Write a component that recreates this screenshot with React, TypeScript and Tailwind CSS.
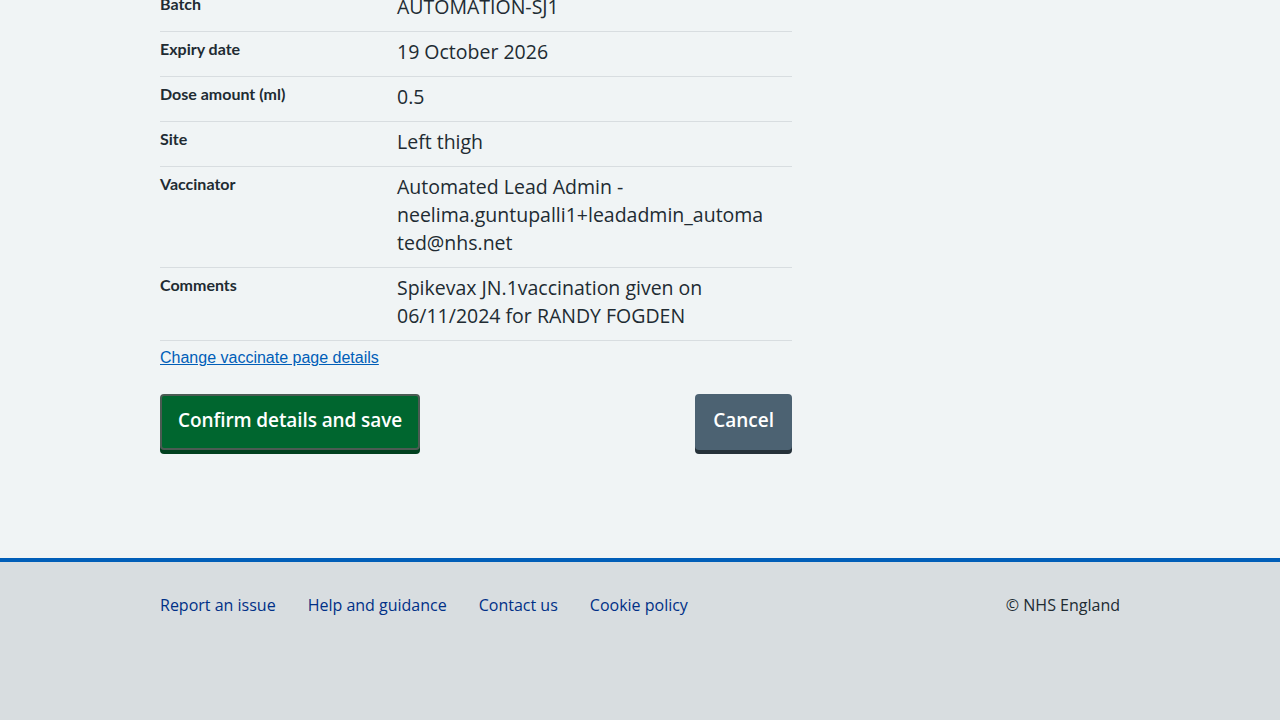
const rows: { key: string; lines: string[] }[] = [
  { key: 'Batch', lines: ['AUTOMATION-SJ1'] },
  { key: 'Expiry date', lines: ['19 October 2026'] },
  { key: 'Dose amount (ml)', lines: ['0.5'] },
  { key: 'Site', lines: ['Left thigh'] },
  {
    key: 'Vaccinator',
    lines: ['Automated Lead Admin -', 'neelima.guntupalli1+leadadmin_automa', 'ted@nhs.net'],
  },
  { key: 'Comments', lines: ['Spikevax JN.1vaccination given on', '06/11/2024 for RANDY FOGDEN'] },
];

const footerLinks = ['Report an issue', 'Help and guidance', 'Contact us', 'Cookie policy'];

export default function App() {
  return (
    <div className="min-h-[720px] flex flex-col bg-[#f0f4f5] text-[#212b32] font-['Open_Sans',sans-serif]">
      <main className="flex-1 px-[160px]">
        <div className="w-[632px] -mt-[13px] pb-[104px]">
          <dl>
            {rows.map((row) => (
              <div key={row.key} className="flex border-b border-[#d8dde0]">
                <dt className="w-[237px] shrink-0 pt-[5px] pr-4 text-[16px] leading-6 font-bold font-['Lato',sans-serif]">
                  {row.key}
                </dt>
                <dd className="flex-1 pt-[6px] pb-[10px] text-[19.5px] leading-7">
                  {row.lines.map((line) => (
                    <span key={line} className="block">
                      {line}
                    </span>
                  ))}
                </dd>
              </div>
            ))}
          </dl>

          <a
            href="#"
            className="mt-[5px] block w-fit text-[16px] leading-6 text-[#005eb8] underline font-['Liberation_Sans',Arial,sans-serif]"
          >
            Change vaccinate page details
          </a>

          <div className="mt-[24px] flex justify-between">
            <button className="rounded-[4px] border-2 border-[#4b5b53] bg-[#00662f] px-4 pt-[10px] pb-[14px] text-[19px] leading-7 font-semibold tracking-[-0.1px] text-white shadow-[0_4px_0_#00401e]">
              Confirm details and save
            </button>
            <button className="rounded-[4px] border-2 border-transparent bg-[#4c6272] px-4 pt-[10px] pb-[14px] text-[19px] leading-7 font-semibold text-white shadow-[0_4px_0_#263139]">
              Cancel
            </button>
          </div>
        </div>
      </main>

      <footer className="h-[162px] border-t-4 border-[#005eb8] bg-[#d8dde0] px-[160px] pt-[31px]">
        <div className="flex justify-between text-[16px] leading-6">
          <ul className="flex gap-8">
            {footerLinks.map((l) => (
              <li key={l}>
                <a href="#" className="text-[#003087]">
                  {l}
                </a>
              </li>
            ))}
          </ul>
          <p className="text-[#212b32]">© NHS England</p>
        </div>
      </footer>
    </div>
  );
}
